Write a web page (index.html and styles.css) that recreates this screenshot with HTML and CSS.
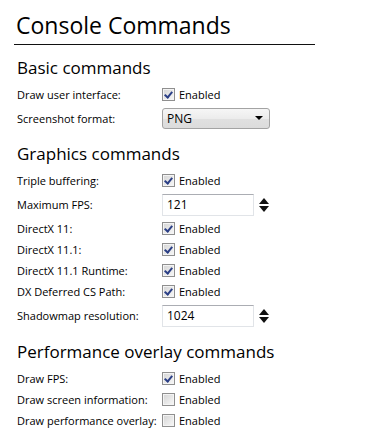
FILE: index.html
```html
<!DOCTYPE html>
<html lang="en">
<head>
<meta charset="UTF-8" />
<title>Console Commands</title>
<link rel="stylesheet" href="styles.css">
</head>
<body>

<h1 class="title">Console Commands</h1>

<h2 class="section first">Basic commands</h2>
<div class="row">
  <div class="label">Draw user interface:</div>
  <label class="check"><span class="box on"></span>Enabled</label>
</div>
<div class="row tall">
  <div class="label">Screenshot format:</div>
  <div class="select">PNG<span class="arrow"></span></div>
</div>

<h2 class="section">Graphics commands</h2>
<div class="row">
  <div class="label">Triple buffering:</div>
  <label class="check"><span class="box on"></span>Enabled</label>
</div>
<div class="row spinrow">
  <div class="label">Maximum FPS:</div>
  <div class="spin"><span class="field">121</span><span class="arrows"><i class="up"></i><i class="down"></i></span></div>
</div>
<div class="row">
  <div class="label">DirectX 11:</div>
  <label class="check"><span class="box on"></span>Enabled</label>
</div>
<div class="row">
  <div class="label">DirectX 11.1:</div>
  <label class="check"><span class="box on"></span>Enabled</label>
</div>
<div class="row">
  <div class="label">DirectX 11.1 Runtime:</div>
  <label class="check"><span class="box on"></span>Enabled</label>
</div>
<div class="row">
  <div class="label">DX Deferred CS Path:</div>
  <label class="check"><span class="box on"></span>Enabled</label>
</div>
<div class="row spinrow">
  <div class="label">Shadowmap resolution:</div>
  <div class="spin"><span class="field">1024</span><span class="arrows"><i class="up"></i><i class="down"></i></span></div>
</div>

<h2 class="section">Performance overlay commands</h2>
<div class="row">
  <div class="label">Draw FPS:</div>
  <label class="check"><span class="box on"></span>Enabled</label>
</div>
<div class="row">
  <div class="label">Draw screen information:</div>
  <label class="check"><span class="box"></span>Enabled</label>
</div>
<div class="row">
  <div class="label">Draw performance overlay:</div>
  <label class="check"><span class="box"></span>Enabled</label>
</div>

</body>
</html>
```

FILE: styles.css
```css
html, body {
  margin: 0; padding: 0; background: #fff; color: #000;
  font-family: "Open Sans", Arial, sans-serif; font-size: 11px;
}
body { padding: 0 0 0 17px; }
.title {
  margin: 0 0 0 -3px; width: 299px; padding: 10px 0 4px 2px;
  font-size: 23px; font-weight: normal; line-height: 30px;
  border-bottom: 1px solid #111;
}
.section {
  margin: 11px 0 4px 0; font-size: 17px; font-weight: normal; line-height: 24px;
}
.section.first { margin-top: 11px; }
.row {
  display: flex; align-items: center; height: 21px;
}
.row.tall { height: 26px; }
.row.spinrow { height: 27px; }
.label { width: 145px; flex: none; }
.check { display: flex; align-items: center; gap: 4px; }
.box {
  width: 11px; height: 11px; border: 1px solid #8f8f8f;
  background: linear-gradient(135deg, #d4d4d4, #f8f8f8);
  box-shadow: inset 0 0 0 1px #f4f4f4;
  position: relative;
}
.box.on::after {
  content: ""; position: absolute; left: 3px; top: 1px;
  width: 3px; height: 6px;
  border: solid #2b3f86; border-width: 0 2px 2px 0;
  transform: rotate(40deg);
}
.select {
  width: 98px; height: 19px; padding: 0 4px;
  border: 1px solid #a3a3a3; border-radius: 3px;
  background: linear-gradient(#f6f6f6, #ececec 50%, #e0e0e0 51%, #dcdcdc);
  display: flex; align-items: center; justify-content: space-between;
  font-size: 12px;
}
.arrow {
  width: 0; height: 0; margin-right: 2px;
  border-left: 4px solid transparent; border-right: 4px solid transparent;
  border-top: 4px solid #000;
}
.spin { display: flex; align-items: center; }
.field {
  width: 86px; height: 20px; padding-left: 4px;
  border: 1px solid #e1e4e8; border-top-color: #abadb3;
  display: flex; align-items: center; font-size: 12px;
}
.arrows {
  display: flex; flex-direction: column; gap: 2px; margin-left: 5px;
}
.arrows i {
  width: 0; height: 0;
  border-left: 5px solid transparent; border-right: 5px solid transparent;
}
.arrows .up { border-bottom: 6px solid #111; }
.arrows .down { border-top: 6px solid #111; }
```
